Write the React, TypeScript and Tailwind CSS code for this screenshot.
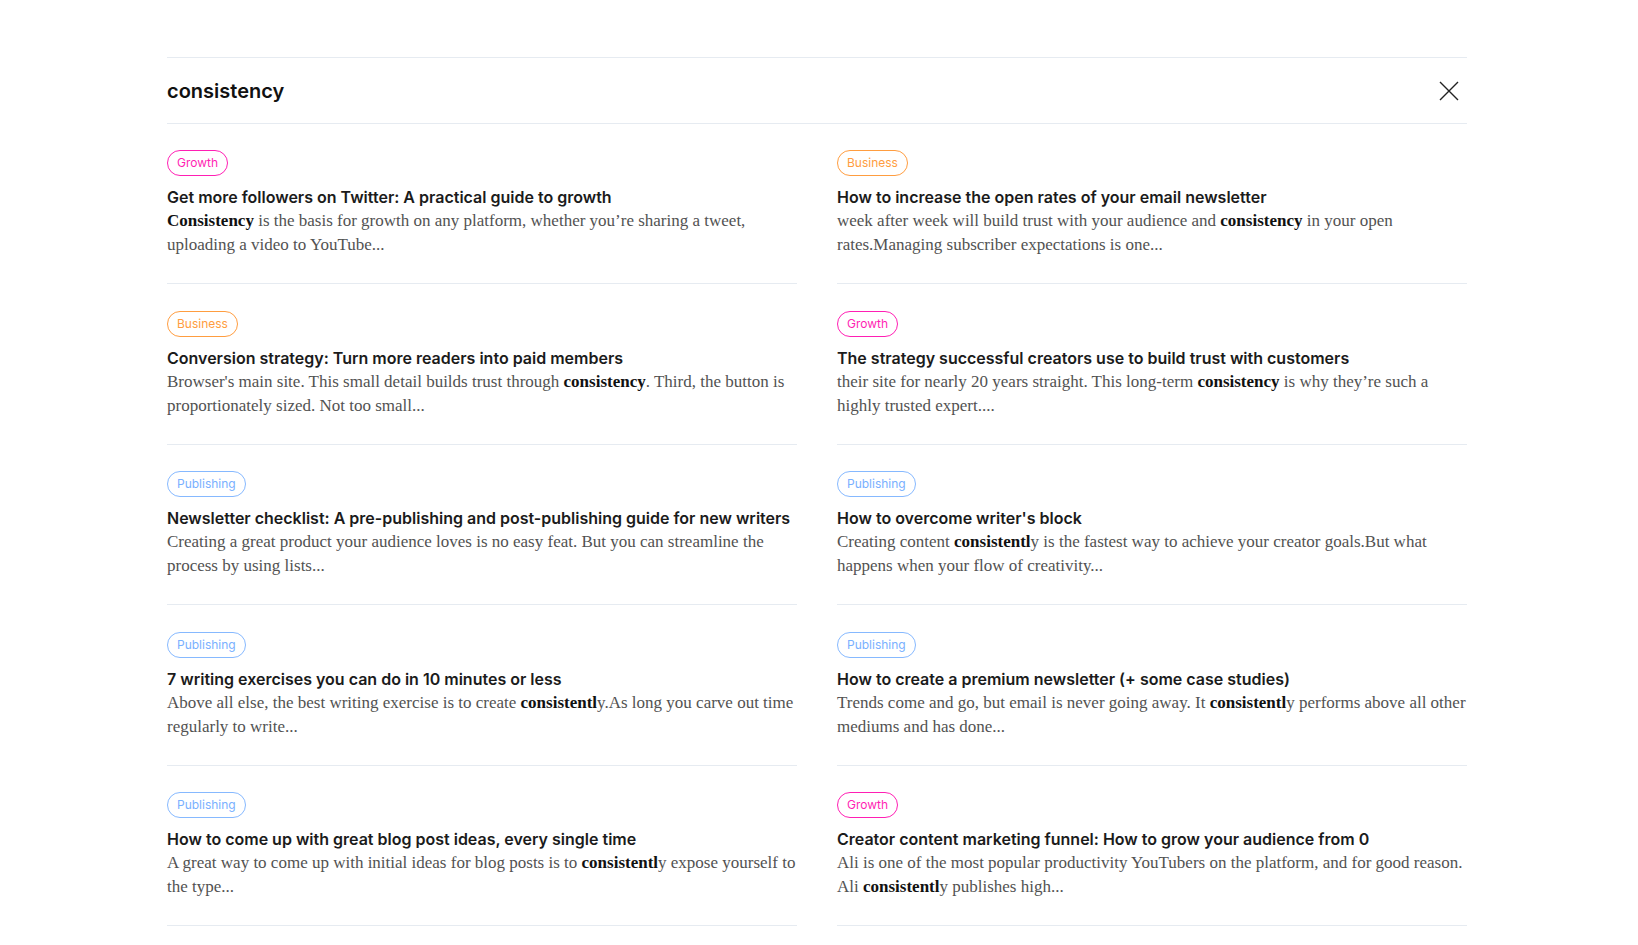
const tagStyles: Record<string, string> = {
  Growth: "border-[#ff1fb4] text-[#ff1fb4]",
  Business: "border-[#ff9d40] text-[#ff9d40]",
  Publishing: "border-[#86b9ff] text-[#79b0ff]",
};

type Result = {
  tag: string;
  title: string;
  // excerpt split into plain / highlighted chunks
  parts: [string, boolean][];
};

const results: Result[] = [
  {
    tag: "Growth",
    title: "Get more followers on Twitter: A practical guide to growth",
    parts: [
      ["Consistency", true],
      [" is the basis for growth on any platform, whether you\u2019re sharing a tweet, uploading a video to YouTube...", false],
    ],
  },
  {
    tag: "Business",
    title: "How to increase the open rates of your email newsletter",
    parts: [
      ["week after week will build trust with your audience and ", false],
      ["consistency", true],
      [" in your open rates.Managing subscriber expectations is one...", false],
    ],
  },
  {
    tag: "Business",
    title: "Conversion strategy: Turn more readers into paid members",
    parts: [
      ["Browser's main site. This small detail builds trust through ", false],
      ["consistency", true],
      [". Third, the button is proportionately sized. Not too small...", false],
    ],
  },
  {
    tag: "Growth",
    title: "The strategy successful creators use to build trust with customers",
    parts: [
      ["their site for nearly 20 years straight. This long-term ", false],
      ["consistency", true],
      [" is why they\u2019re such a highly trusted expert....", false],
    ],
  },
  {
    tag: "Publishing",
    title: "Newsletter checklist: A pre-publishing and post-publishing guide for new writers",
    parts: [
      ["Creating a great product your audience loves is no easy feat. But you can streamline the process by using lists...", false],
    ],
  },
  {
    tag: "Publishing",
    title: "How to overcome writer's block",
    parts: [
      ["Creating content ", false],
      ["consistentl", true],
      ["y is the fastest way to achieve your creator goals.But what happens when your flow of creativity...", false],
    ],
  },
  {
    tag: "Publishing",
    title: "7 writing exercises you can do in 10 minutes or less",
    parts: [
      ["Above all else, the best writing exercise is to create ", false],
      ["consistentl", true],
      ["y.As long you carve out time regularly to write...", false],
    ],
  },
  {
    tag: "Publishing",
    title: "How to create a premium newsletter (+ some case studies)",
    parts: [
      ["Trends come and go, but email is never going away. It ", false],
      ["consistentl", true],
      ["y performs above all other mediums and has done...", false],
    ],
  },
  {
    tag: "Publishing",
    title: "How to come up with great blog post ideas, every single time",
    parts: [
      ["A great way to come up with initial ideas for blog posts is to ", false],
      ["consistentl", true],
      ["y expose yourself to the type...", false],
    ],
  },
  {
    tag: "Growth",
    title: "Creator content marketing funnel: How to grow your audience from 0",
    parts: [
      ["Ali is one of the most popular productivity YouTubers on the platform, and for good reason. Ali ", false],
      ["consistentl", true],
      ["y publishes high...", false],
    ],
  },
];

function ResultCard({ result }: { result: Result }) {
  return (
    <a href="#" className="flex flex-col items-start border-b border-[#e6ebf1] pt-[26.4px] pb-[26px]">
      <span
        className={`flex h-[26px] items-center rounded-full border px-[9px] text-[12px] ${tagStyles[result.tag]}`}
      >
        {result.tag}
      </span>
      <h3 className="mt-[10px] text-[16px] leading-[23px] font-semibold text-[#1b1b1b]">
        {result.title}
      </h3>
      <p className="font-['Liberation_Serif',serif] text-[17px] leading-6 text-[#525252]">
        {result.parts.map(([text, bold], i) =>
          bold ? (
            <strong key={i} className="font-bold text-[#111]">
              {text}
            </strong>
          ) : (
            <span key={i}>{text}</span>
          )
        )}
      </p>
    </a>
  );
}

export default function App() {
  return (
    <div className="min-h-screen bg-white font-['Inter',sans-serif] antialiased">
      <div className="ml-[167px] w-[1300px] pt-[57px]">
        <div className="flex h-[67px] items-center justify-between border-y border-[#e6ebf1]">
          <span className="text-[20px] font-semibold text-[#111]">consistency</span>
          <button className="mr-[8px] text-[#222]" aria-label="Close">
            <svg width="20" height="20" viewBox="0 0 20 20" fill="none" stroke="currentColor" strokeWidth="1.4">
              <path d="M1 1l18 18M19 1L1 19" />
            </svg>
          </button>
        </div>
        <div className="grid grid-cols-2 gap-x-10">
          {results.map((r) => (
            <ResultCard key={r.title} result={r} />
          ))}
        </div>
      </div>
    </div>
  );
}
